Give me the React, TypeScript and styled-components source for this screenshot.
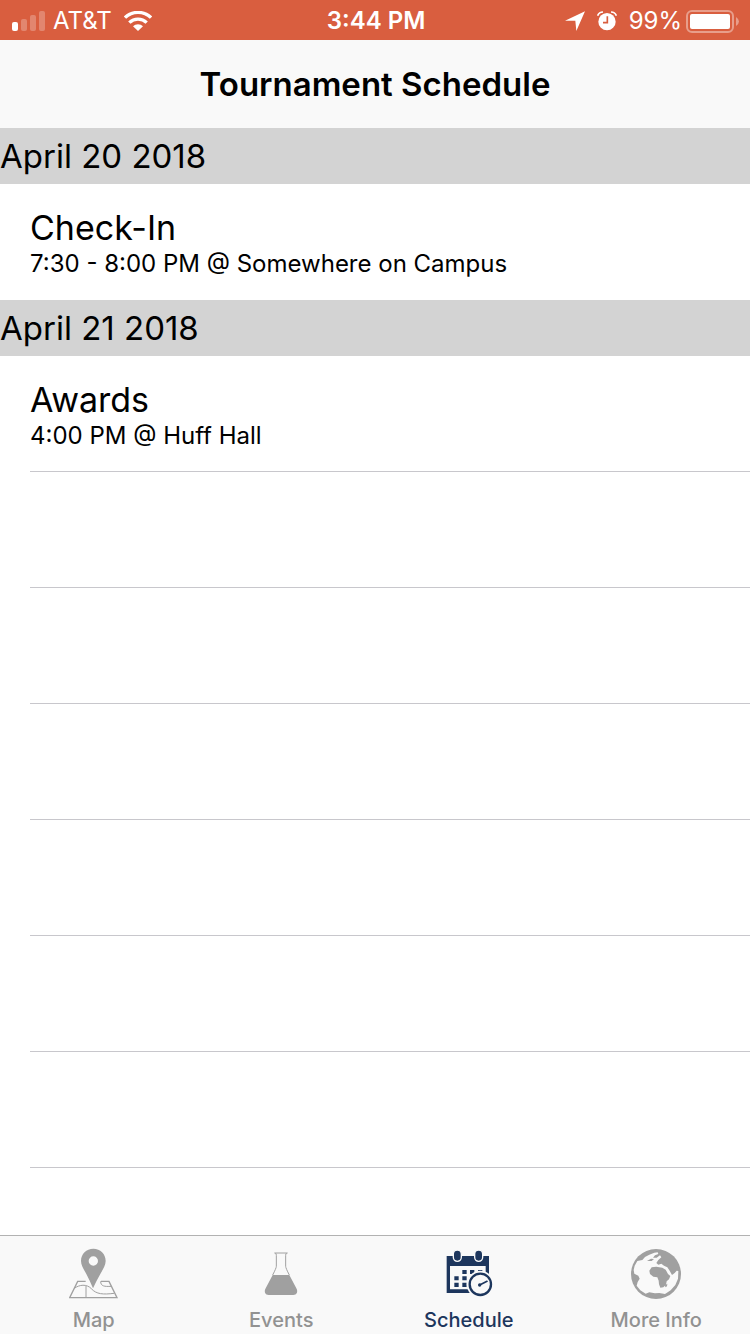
import React from "react";
import styled, { createGlobalStyle } from "styled-components";

const GlobalStyle = createGlobalStyle`
  *, *::before, *::after { box-sizing: border-box; }
  body {
    margin: 0;
    background: #ffffff;
    color: #000000;
    font-family: Inter, "Liberation Sans", sans-serif;
  }
  h1, h2, h3, p, ul { margin: 0; padding: 0; }
  ul { list-style: none; }
  svg { display: block; flex: none; }
`;

const Screen = styled.div`
  display: flex;
  flex-direction: column;
  min-height: 100vh;
`;

const StatusBar = styled.div`
  display: grid;
  grid-template-columns: 1fr auto 1fr;
  align-items: center;
  height: 40px;
  padding: 1px 10px 0 12px;
  background: #d95e3f;
  color: #ffffff;
  font-size: 24px;
  line-height: 40px;
`;

const StatusGroup = styled.div<{ $end?: boolean }>`
  display: flex;
  align-items: center;
  gap: ${(p) => (p.$end ? 4 : 8)}px;
  justify-content: ${(p) => (p.$end ? "flex-end" : "flex-start")};
`;

const Indicators = styled.div`
  display: flex;
  align-items: center;
  gap: 12px;
`;

const Clock = styled.time`
  font-size: 24px;
  font-weight: 600;
`;

const Carrier = styled.div`
  display: flex;
  align-items: center;
  gap: 12px;
`;

const TitleBar = styled.header`
  display: flex;
  align-items: center;
  justify-content: center;
  height: 88px;
  background: #f9f9f9;
`;

const Title = styled.h1`
  font-size: 33px;
  line-height: 40px;
  font-weight: 600;
`;

const Content = styled.main`
  flex: 1;
`;

const DayHeader = styled.h2`
  height: 56px;
  background: #d3d3d3;
  font-size: 33px;
  line-height: 56px;
  font-weight: 400;
`;

const Row = styled.li<{ $separator?: boolean }>`
  height: 116px;
  margin-left: 30px;
  padding-top: 24px;
  border-bottom: ${(p) => (p.$separator ? "1px solid #c8c7cc" : "none")};
`;

const RowTitle = styled.h3`
  font-size: 34px;
  line-height: 40px;
  font-weight: 400;
`;

const RowDetail = styled.p`
  font-size: 24px;
  line-height: 32px;
`;

const TabBar = styled.nav`
  display: grid;
  grid-template-columns: repeat(4, 1fr);
  height: 99px;
  background: #f9f9f9;
  border-top: 1px solid #b2b2b2;
`;

const Tab = styled.button<{ $active?: boolean }>`
  display: flex;
  flex-direction: column;
  align-items: center;
  gap: 8px;
  padding: 12px 0 0;
  border: 0;
  background: none;
  color: ${(p) => (p.$active ? "#1d365d" : "#929292")};
  font-family: inherit;
  font-size: 20px;
  line-height: 24px;
  font-weight: 500;
`;

const SignalIcon = () => (
  <svg width="33" height="20" viewBox="0 0 33 20" fill="#fff" aria-hidden="true">
    <rect x="0" y="11" width="6" height="9" rx="2" />
    <g opacity="0.25">
      <rect x="9" y="8" width="6" height="12" rx="2" />
      <rect x="18" y="4" width="6" height="16" rx="2" />
      <rect x="27" y="0" width="6" height="20" rx="2" />
    </g>
  </svg>
);

const WifiIcon = () => (
  <svg width="28" height="20" viewBox="0 0 84 60" aria-hidden="true">
    <g fill="none" stroke="#fff" strokeWidth="10">
      <path d="M3 20 A56 56 0 0 1 81 20" />
      <path d="M16 35 A37 37 0 0 1 68 35" />
    </g>
    <path d="M27 46 A21 21 0 0 1 57 46 L42 60 Z" fill="#fff" />
  </svg>
);

const LocationIcon = () => (
  <svg width="20" height="20" viewBox="0 0 60 60" fill="#fff" aria-hidden="true">
    <path d="M0 29 L60 1 L34 60 L31 29 Z" />
  </svg>
);

const AlarmIcon = () => (
  <svg width="20" height="20" viewBox="0 0 60 60" aria-hidden="true">
    <circle cx="30" cy="32" r="26" fill="#fff" />
    <path d="M2 14 Q6 3 18 3 M58 14 Q54 3 42 3" fill="none" stroke="#fff" strokeWidth="5" />
    <path d="M31 16 V35 H18" fill="none" stroke="#d95e3f" strokeWidth="5" />
  </svg>
);

const BatteryIcon = () => (
  <svg width="54" height="23" viewBox="0 0 54 23" aria-hidden="true">
    <rect x="1" y="1" width="46" height="21" rx="5" fill="none" stroke="#fff" strokeOpacity="0.4" strokeWidth="2" />
    <rect x="4" y="4" width="40" height="15" rx="2" fill="#fff" />
    <path d="M50 7 Q53 9 53 11.500 Q53 14 50 16 Z" fill="#fff" fillOpacity="0.4" />
  </svg>
);

const MapIcon = () => (
  <svg width="50" height="52" viewBox="0 0 150 156" aria-hidden="true">
    <g fill="none" stroke="#a0a0a0" strokeWidth="4">
      <path d="M50 100 H26 L2 149 H144 L120 100 H96" />
      <path
        strokeWidth="3"
        d="M16 121 C31 110 53 107 67 122 C82 139 103 140 135 136 M51 114 V149 M95 100 C95 115 106 116 127 115"
      />
    </g>
    <path
      fill="#a0a0a0"
      fillRule="evenodd"
      d="M73 2 C52 2 36 18 36 39 C36 52 45 65 52 78 Q62 97 72 121 Q83 97 94 78 C101 65 110 52 110 39 C110 18 94 2 73 2 Z M73 25 A14 14 0 1 1 73 53 A14 14 0 1 1 73 25 Z"
    />
  </svg>
);

const FlaskIcon = () => (
  <svg width="50" height="52" viewBox="0 0 150 156" aria-hidden="true">
    <path
      fill="none"
      stroke="#a0a0a0"
      strokeWidth="3"
      d="M55 15 H95 M58 15 Q61 17 61 22 V55 Q61 60 50 81 M92 15 Q89 17 89 22 V55 Q89 60 100 81"
    />
    <path fill="#a0a0a0" d="M50 81 H100 L121 121 C127 132 122 141 112 141 H38 C28 141 23 132 29 121 Z" />
  </svg>
);

const CalendarIcon = () => (
  <svg width="50" height="52" viewBox="0 0 150 156" aria-hidden="true">
    <g fill="#1d365d">
      <path fillRule="evenodd" d="M8 24 H135 V135 H8 Z M18 54 V124 H125 V54 Z" />
      <path d="M55 66 h13 v12 h-13 Z M78 66 h13 v12 h-13 Z M102 66 h13 v12 h-13 Z" />
      <path d="M31 85 h13 v12 h-13 Z M55 85 h13 v12 h-13 Z M78 85 h13 v12 h-13 Z" />
      <path d="M31 104 h13 v13 h-13 Z M55 104 h13 v13 h-13 Z" />
    </g>
    <g fill="#1d365d" stroke="#f9f9f9" strokeWidth="4">
      <rect x="28" y="6" width="24" height="34" rx="12" />
      <rect x="92" y="6" width="24" height="34" rx="12" />
    </g>
    <circle cx="109" cy="109" r="41" fill="#f9f9f9" />
    <circle cx="109" cy="109" r="32" fill="none" stroke="#1d365d" strokeWidth="7" />
    <path d="M107 111 L129 100" stroke="#1d365d" strokeWidth="5" strokeLinecap="round" />
    <circle cx="107" cy="111" r="5" fill="#1d365d" />
  </svg>
);

const GlobeIcon = () => (
  <svg width="50" height="52" viewBox="0 0 150 156" aria-hidden="true">
    <circle cx="75" cy="78" r="75" fill="#a0a0a0" />
    <path
      fill="#f9f9f9"
      d="M11 53 L19 39 L34 36 L42 27 L55 20 L70 14 L80 13 L82 18 L72 22 L66 29 L77 29 L87 22 L91 28 L82 36 L76 45 L82 50 L91 47 L99 53 L109 58 L116 68 L123 81 L131 75 L137 68 L142 69 L141 92 L133 111 L119 127 L102 138 L85 135 L72 136 L55 133 L44 137 L28 127 L17 113 L20 102 L26 92 L22 83 L10 77 L8 66 Z"
    />
    <g fill="#a0a0a0">
      <path d="M55 68 L62 58 L76 56 L94 59 L104 65 L111 78 L118 84 L114 94 L107 100 L105 110 L97 118 L88 119 L84 109 L83 98 L79 88 L67 86 L57 78 Z" />
      <path d="M102 112 L109 107 L108 115 L103 118 Z" />
      <path d="M48 39 L60 32 L69 33 L62 39 Z" />
    </g>
  </svg>
);

interface ScheduleEvent {
  name: string;
  detail: string;
}

interface ScheduleDay {
  date: string;
  events: ScheduleEvent[];
}

const days: ScheduleDay[] = [
  { date: "April 20 2018", events: [{ name: "Check-In", detail: "7:30 - 8:00 PM @ Somewhere on Campus" }] },
  { date: "April 21 2018", events: [{ name: "Awards", detail: "4:00 PM @ Huff Hall" }] },
];

const tabs = [
  { label: "Map", Icon: MapIcon },
  { label: "Events", Icon: FlaskIcon },
  { label: "Schedule", Icon: CalendarIcon },
  { label: "More Info", Icon: GlobeIcon },
];

const EMPTY_ROWS = 6;

export default function App() {
  return (
    <>
      <GlobalStyle />
      <Screen>
        <StatusBar>
          <StatusGroup>
            <SignalIcon />
            <Carrier>
              <span>AT&amp;T</span>
              <WifiIcon />
            </Carrier>
          </StatusGroup>
          <Clock>3:44 PM</Clock>
          <StatusGroup $end>
            <Indicators>
              <LocationIcon />
              <AlarmIcon />
              <span>99%</span>
            </Indicators>
            <BatteryIcon />
          </StatusGroup>
        </StatusBar>
        <TitleBar>
          <Title>Tournament Schedule</Title>
        </TitleBar>
        <Content>
          {days.map((day, index) => (
            <section key={day.date}>
              <DayHeader>{day.date}</DayHeader>
              <ul>
                {day.events.map((event) => (
                  <Row key={event.name} $separator={index === days.length - 1}>
                    <RowTitle>{event.name}</RowTitle>
                    <RowDetail>{event.detail}</RowDetail>
                  </Row>
                ))}
              </ul>
            </section>
          ))}
          <ul aria-hidden="true">
            {Array.from({ length: EMPTY_ROWS }, (_, i) => (
              <Row key={i} $separator />
            ))}
          </ul>
        </Content>
        <TabBar>
          {tabs.map(({ label, Icon }) => {
            const active = label === "Schedule";
            return (
              <Tab key={label} type="button" $active={active} aria-current={active ? "page" : undefined}>
                <Icon />
                {label}
              </Tab>
            );
          })}
        </TabBar>
      </Screen>
    </>
  );
}
